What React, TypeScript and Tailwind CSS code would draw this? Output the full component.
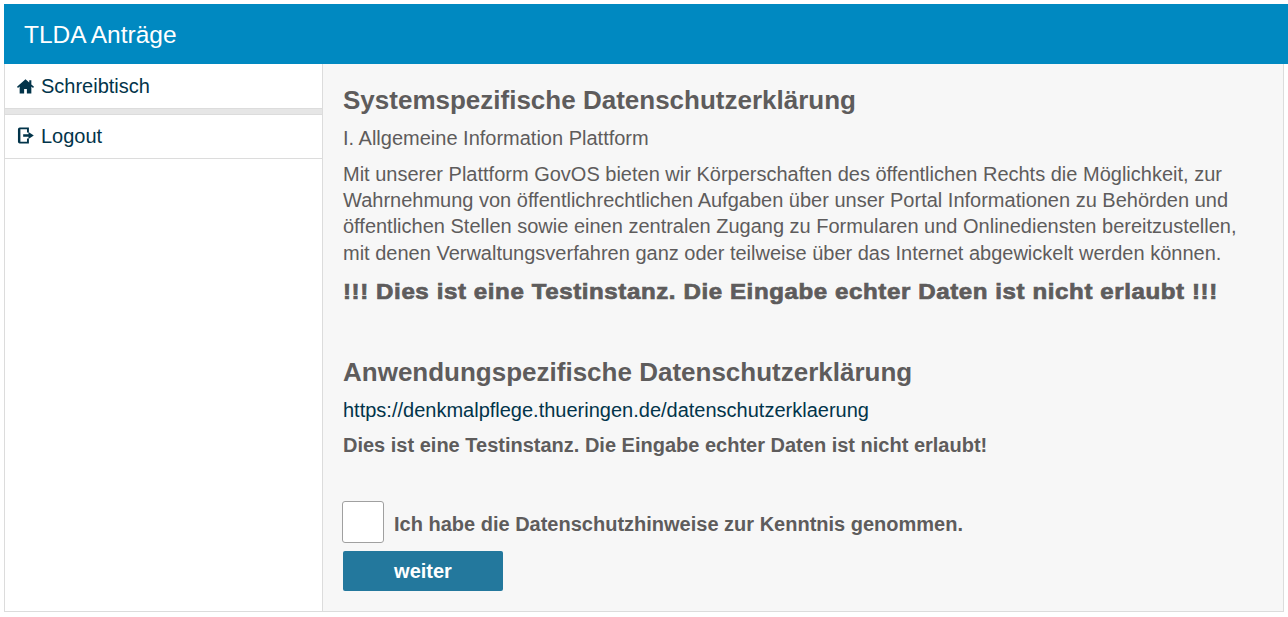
function HomeIcon() {
  return (
    <svg viewBox="0 0 16 16" className="h-[17px] w-[17px] fill-[#02344a]">
      <path d="M8 1.2 0 8.3l0.9 1.1 1.6-1.4v6.7h4.2v-4.4h2.6v4.4h4.2V8l1.6 1.4 0.9-1.1-2.5-2.2V2.2h-2v2.1z" />
    </svg>
  );
}

function LogoutIcon() {
  return (
    <svg viewBox="0 0 16 16" className="h-[17px] w-[17px] fill-[#02344a]">
      <path d="M2.6 0.4h8.6v4.8H9.4V2.2H3.2v11.6h6.2v-3h1.8v4.8H2.6A1.7 1.7 0 0 1 0.9 13.9V2.1A1.7 1.7 0 0 1 2.6 0.4z" />
      <path d="M5.8 6.9h5V4.6L15.8 8l-5 3.4V9.1h-5z" />
    </svg>
  );
}

export default function App() {
  return (
    <div className="h-[617px] overflow-hidden bg-white pt-1 pl-1 font-['Liberation_Sans',Arial,sans-serif]">
      <header className="flex h-[60px] items-center bg-[#0089c1] px-5 pt-[3px] text-[24.5px] text-white">
        TLDA Anträge
      </header>
      <div className="mr-1 flex h-[548px] border-x border-b border-[#dcdcdc]">
        <nav className="w-[318px] shrink-0 border-r border-[#dcdcdc] text-[20px] text-[#02344a]">
          <a className="flex h-[44px] items-center gap-[7px] px-3">
            <HomeIcon />
            Schreibtisch
          </a>
          <div className="h-1.5 border-t border-[#dcdcdc] bg-[#e6e6e6]" />
          <a className="flex h-[45px] items-center gap-[7px] border-y border-[#dcdcdc] px-3 pb-0.5">
            <LogoutIcon />
            Logout
          </a>
        </nav>
        <main className="flex-1 bg-[#f7f7f7] px-5 pt-5 text-[#5e5c5c]">
          <h2 className="text-[26px] leading-[32px] font-bold">Systemspezifische Datenschutzerklärung</h2>
          <p className="mt-[9px] text-[20px] leading-[26px]">I. Allgemeine Information Plattform</p>
          <p className="mt-2.5 text-[20px] leading-[26.2px]">
            Mit unserer Plattform GovOS bieten wir Körperschaften des öffentlichen Rechts die Möglichkeit, zur
            <br />
            Wahrnehmung von öffentlichrechtlichen Aufgaben über unser Portal Informationen zu Behörden und
            <br />
            öffentlichen Stellen sowie einen zentralen Zugang zu Formularen und Onlinediensten bereitzustellen,
            <br />
            mit denen Verwaltungsverfahren ganz oder teilweise über das Internet abgewickelt werden können.
          </p>
          <p className="mt-[13.5px] origin-left scale-x-[1.12] text-[21.5px] leading-[26px] font-bold tracking-[0.53px] whitespace-nowrap [-webkit-text-stroke:0.7px_#5e5c5c]">
            !!! Dies ist eine Testinstanz. Die Eingabe echter Daten ist nicht erlaubt !!!
          </p>
          <h2 className="mt-[51px] text-[26px] leading-[32px] font-bold">Anwendungspezifische Datenschutzerklärung</h2>
          <a className="mt-[9px] block text-[20px] leading-[26px] text-[#02344a]">
            https://denkmalpflege.thueringen.de/datenschutzerklaerung
          </a>
          <p className="mt-[9px] text-[20px] leading-[26px] font-bold">
            Dies ist eine Testinstanz. Die Eingabe echter Daten ist nicht erlaubt!
          </p>
          <label className="mt-[43px] flex items-end">
            <span className="-ml-px h-[42px] w-[42px] rounded-[3px] border border-[#a0a0a0] bg-white" />
            <span className="mb-[7px] ml-[10px] text-[20px] leading-[24px] font-bold">
              Ich habe die Datenschutzhinweise zur Kenntnis genommen.
            </span>
          </label>
          <button
            type="button"
            className="mt-2 block h-10 w-40 rounded-[2px] bg-[#23789d] text-[20px] font-bold text-white"
          >
            weiter
          </button>
        </main>
      </div>
    </div>
  );
}
